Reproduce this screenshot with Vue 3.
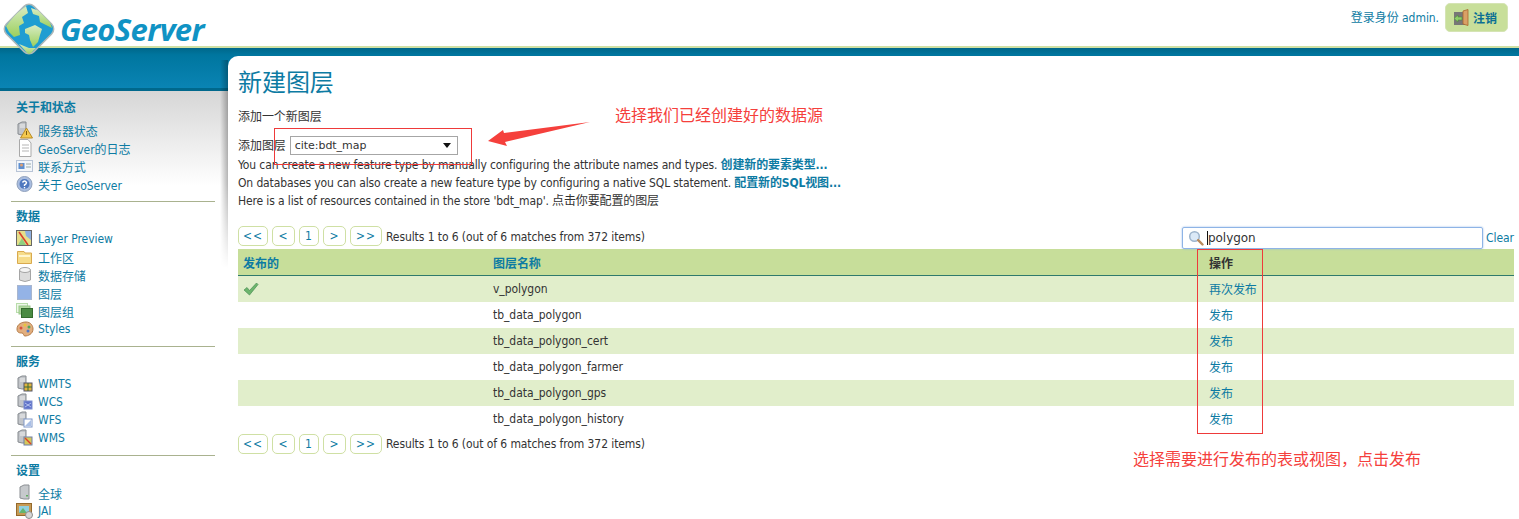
<template>
  <div class="page">
    <header class="header">
      <div class="brand">
        <svg class="logo" width="54" height="54" viewBox="0 0 54 54">
          <defs>
            <clipPath id="gem"><rect x="7.5" y="7.5" width="39" height="39" rx="7" transform="rotate(45 27 27)" /></clipPath>
            <linearGradient id="land" x1="0" y1="0" x2="0" y2="1">
              <stop offset="0" stop-color="#d8ecc4" />
              <stop offset="1" stop-color="#9ccf5c" />
            </linearGradient>
          </defs>
          <rect x="7.5" y="7.5" width="39" height="39" rx="7" transform="rotate(45 27 27)" fill="#1f9dd2" stroke="#aeb8b8" stroke-width="1.5" />
          <g clip-path="url(#gem)" fill="url(#land)">
            <path d="M4 24 L14 12 L24 4 L26 11 L20 15 L22 21 L17 24 L18 33 L12 35 L7 30 Z" />
            <path d="M23 27 L33 23 L40 27 L38 33 L36 40 L31 45 L28 38 L27 33 L23 31 Z" />
            <path d="M29 6 L38 9 L47 18 L50 26 L44 23 L38 20 L37 14 L31 12 Z" />
            <path d="M17 42 L27 46 L34 46 L27 53 Z" />
          </g>
        </svg>
        <span class="wordmark">GeoServer</span>
      </div>
      <div class="login">
        <span>登录身份 admin.</span>
        <a class="logout">
          <svg width="17" height="17" viewBox="0 0 17 17">
            <rect x="1" y="3" width="11" height="13" fill="#777" />
            <path d="M10 2 L15 0.5 V16.5 L10 15 Z" fill="#d9a066" stroke="#a8642c" stroke-width="0.8" />
            <path d="M1 9.5 L5 6 V8 H9 V11 H5 V13 Z" fill="#8fce6a" stroke="#4d8f3a" stroke-width="0.6" />
          </svg>
          注销
        </a>
      </div>
    </header>
    <div class="band"></div>

    <div class="body">
      <aside class="sidebar">
        <section v-for="group in menu" :key="group.title" class="group">
          <h3>{{ group.title }}</h3>
          <ul>
            <li v-for="item in group.items" :key="item.label">
              <svg class="icon" width="18" height="18" viewBox="0 0 18 18" v-html="icons[item.icon]"></svg>
              <span>{{ item.label }}</span>
            </li>
          </ul>
        </section>
      </aside>

      <main class="content">
        <h1>新建图层</h1>
        <p class="intro">添加一个新图层</p>
        <div class="store-row">
          <label>添加图层</label>
          <div class="select">
            <span>cite:bdt_map</span>
            <i class="caret"></i>
          </div>
          <svg class="red-arrow" width="103" height="25" viewBox="0 0 103 25">
            <path d="M0 19 L15 8 L16 11 L102 0 L17 20 L19 24 Z" fill="#f5403c" />
          </svg>
          <span class="note note-top">选择我们已经创建好的数据源</span>
        </div>
        <p class="line">You can create a new feature type by manually configuring the attribute names and types. <b>创建新的要素类型...</b></p>
        <p class="line">On databases you can also create a new feature type by configuring a native SQL statement. <b>配置新的SQL视图...</b></p>
        <p class="line">Here is a list of resources contained in the store 'bdt_map'. 点击你要配置的图层</p>

        <div class="toolbar">
          <div class="pager">
            <button v-for="p in pager" :key="p.text" :class="p.kind">{{ p.text }}</button>
            <span class="count">Results 1 to 6 (out of 6 matches from 372 items)</span>
          </div>
          <div class="search">
            <div class="search-box">
              <svg width="16" height="16" viewBox="0 0 16 16">
                <circle cx="6.5" cy="6.5" r="4.8" fill="#dbe9f7" stroke="#9db4cc" stroke-width="1.5" />
                <path d="M10.2 10.2 L14.5 14.5" stroke="#b98a5a" stroke-width="2.4" stroke-linecap="round" />
              </svg>
              <span class="cursor"></span>
              <span>polygon</span>
            </div>
            <a>Clear</a>
          </div>
        </div>

        <table>
          <thead>
            <tr>
              <th class="col-pub">发布的</th>
              <th class="col-name">图层名称</th>
              <th class="col-act">操作</th>
            </tr>
          </thead>
          <tbody>
            <tr v-for="(row, i) in rows" :key="row.name" :class="{ odd: i % 2 === 0 }">
              <td>
                <svg v-if="row.published" class="check" width="16" height="14" viewBox="0 0 16 14">
                  <path d="M1 8 L4 5.5 L6.5 8.5 L13.5 1 L15 2.5 L6.5 13 Z" fill="#6cb56c" stroke="#4a8f55" stroke-width="0.7" />
                </svg>
              </td>
              <td class="name">{{ row.name }}</td>
              <td class="action"><a>{{ row.published ? '再次发布' : '发布' }}</a></td>
            </tr>
          </tbody>
        </table>

        <div class="pager pager-bottom">
          <button v-for="p in pager" :key="p.text" :class="p.kind">{{ p.text }}</button>
          <span class="count">Results 1 to 6 (out of 6 matches from 372 items)</span>
        </div>

        <div class="mark mark-select"></div>
        <div class="mark mark-actions"></div>
        <span class="note note-bottom">选择需要进行发布的表或视图，点击发布</span>
      </main>
    </div>
  </div>
</template>

<script setup>
const server = '<path d="M2 3 L6 1 H10 V14 H6 L2 13 Z" fill="#c2c5c9" stroke="#858a8f"/><path d="M4 4 H9 M4 6 H9" stroke="#eee"/>'

const icons = {
  status: server + '<path d="M10.5 7 L16.5 17 H4.5 Z" fill="#f4c94e" stroke="#b98a24"/><path d="M10.5 10 V14" stroke="#7a5a10"/>',
  doc: '<path d="M3.5 .5 H12 L15 4 V17.5 H3.5 Z" fill="#fff" stroke="#a9a9a9"/><path d="M6 6 H13 M6 9 H13 M6 12 H13" stroke="#b5b5b5"/>',
  card: '<rect x=".5" y="3.5" width="16" height="11" fill="#f3f6fa" stroke="#b8c4d6"/><rect x="2.5" y="6" width="6" height="6" fill="#5f8fd0"/><circle cx="5.5" cy="8" r="1.5" fill="#e0a070"/><path d="M10 7 H15 M10 10 H15" stroke="#9aa"/>',
  about: '<circle cx="8.5" cy="9" r="7.5" fill="#a9bde0" stroke="#8fa0bb"/><circle cx="8.5" cy="9" r="5" fill="#4f78bf"/><path d="M6.5 7.5 Q8.5 4.5 10.5 7.5 Q10.5 9 8.5 10 V11" fill="none" stroke="#fff" stroke-width="1.4"/><rect x="7.8" y="12" width="1.4" height="1.4" fill="#fff"/>',
  preview: '<rect x=".5" y=".5" width="15" height="15" fill="#e6df8a" stroke="#666"/><path d="M9 1 H15 V10 L10 6 Z" fill="#8fb0e0"/><path d="M2 15 L6 8 L10 15 Z" fill="#8fcf80"/><path d="M3 2 L12 15" stroke="#d9402c" stroke-width="1.6"/>',
  folder: '<path d="M1.5 3.5 H8 L9 5 H15.5 V15.5 H1.5 Z" fill="#f6dc8a" stroke="#d9a94e"/><rect x="3" y="7" width="11" height="2" fill="#fff6cf"/>',
  store: '<path d="M3.5 4 V14 Q9 17 14.5 14 V4 Z" fill="#dcdcdc" stroke="#a5a5a5"/><ellipse cx="9" cy="4" rx="5.5" ry="2.5" fill="#f4f4f4" stroke="#a5a5a5"/>',
  layer: '<rect x="1.5" y="1.5" width="14" height="14" fill="#94b3e6" stroke="#a8b6cf"/>',
  group: '<rect x=".5" y="1.5" width="11" height="9" fill="#eef7e8" stroke="#b8ddaa"/><rect x="3" y="4" width="11" height="8" fill="#b5daa2" stroke="#96c688"/><rect x="5.5" y="6.5" width="11" height="9" fill="#4a8a42" stroke="#356b2e"/>',
  styles: '<path d="M1 9 C1 4 6 2 10 2 C15 2 17 6 17 9 C17 14 12 16 9 16 C7 16 8 13 6 13 C4 13 1 13 1 9 Z" fill="#e2ae7e" stroke="#b57d4a"/><circle cx="5" cy="8" r="1.5" fill="#d9503a"/><circle cx="9" cy="5" r="1.5" fill="#e8c53c"/><circle cx="13" cy="7" r="1.5" fill="#4fa85a"/><circle cx="12" cy="11" r="1.5" fill="#4f78c9"/>',
  wmts: server + '<rect x="8" y="8" width="8" height="8" fill="#e0b43c" stroke="#556"/><path d="M12 8 V16 M8 12 H16" stroke="#3a6a3a"/>',
  wcs: server + '<rect x="8" y="8" width="8" height="8" fill="#5f72c9" stroke="#7f8fd0"/><path d="M9 10 L15 14 M15 10 L9 14" stroke="#b5c2ef"/>',
  wfs: server + '<rect x="8" y="8" width="8" height="8" fill="#fff" stroke="#7e97c9"/><path d="M9 15 L15 9 V15 Z" fill="#a9bfe6"/>',
  wms: server + '<rect x="8" y="8" width="8" height="8" fill="#d6c85a" stroke="#6f7fa8"/><path d="M9 9 L15 15" stroke="#d9402c" stroke-width="1.4"/>',
  global: '<path d="M4 3 L8 1 H13 V15 H8 L4 14 Z" fill="#c6c9cc" stroke="#8b8f93"/><rect x="10" y="11" width="2" height="1.5" fill="#5fae5f"/>',
  jai: '<rect x=".5" y="1.5" width="15" height="12" fill="#c69a55" stroke="#94692c"/><rect x="3" y="4" width="10" height="7" fill="#8fd0e0"/><path d="M3 11 L7 6 L11 11 Z" fill="#63b56f"/><circle cx="13" cy="13" r="3.5" fill="#d5d5d5" stroke="#8d8d8d"/>'
}

const menu = [
  {
    title: '关于和状态',
    items: [
      { label: '服务器状态', icon: 'status' },
      { label: 'GeoServer的日志', icon: 'doc' },
      { label: '联系方式', icon: 'card' },
      { label: '关于 GeoServer', icon: 'about' }
    ]
  },
  {
    title: '数据',
    items: [
      { label: 'Layer Preview', icon: 'preview' },
      { label: '工作区', icon: 'folder' },
      { label: '数据存储', icon: 'store' },
      { label: '图层', icon: 'layer' },
      { label: '图层组', icon: 'group' },
      { label: 'Styles', icon: 'styles' }
    ]
  },
  {
    title: '服务',
    items: [
      { label: 'WMTS', icon: 'wmts' },
      { label: 'WCS', icon: 'wcs' },
      { label: 'WFS', icon: 'wfs' },
      { label: 'WMS', icon: 'wms' }
    ]
  },
  {
    title: '设置',
    items: [
      { label: '全球', icon: 'global' },
      { label: 'JAI', icon: 'jai' }
    ]
  }
]

const pager = [
  { text: '<<', kind: 'first' },
  { text: '<', kind: 'step' },
  { text: '1', kind: 'num' },
  { text: '>', kind: 'step' },
  { text: '>>', kind: 'last' }
]

const rows = [
  { name: 'v_polygon', published: true },
  { name: 'tb_data_polygon', published: false },
  { name: 'tb_data_polygon_cert', published: false },
  { name: 'tb_data_polygon_farmer', published: false },
  { name: 'tb_data_polygon_gps', published: false },
  { name: 'tb_data_polygon_history', published: false }
]
</script>

<style>
html, body {
  margin: 0;
  height: 519px;
  overflow: hidden;
  background: #fff;
}
</style>

<style scoped>
.page {
  width: 1519px;
  height: 519px;
  overflow: hidden;
  font-family: "DejaVu Sans Condensed", "DejaVu Sans", "Noto Sans CJK SC", sans-serif;
  font-size: 12px;
  letter-spacing: -0.05px;
  color: #333;
}

.header {
  height: 46px;
  display: flex;
  justify-content: space-between;
  border-bottom: 2px solid #cfe0a4;
  box-sizing: content-box;
}

.brand {
  display: flex;
  align-items: flex-start;
  position: relative;
  z-index: 2;
}

.logo {
  margin: 2px 0 0 2px;
  flex: none;
}

.wordmark {
  margin: 10px 0 0 4px;
  font-family: "Open Sans", sans-serif;
  font-style: italic;
  font-weight: 700;
  font-size: 31px;
  line-height: 38px;
  letter-spacing: -0.65px;
  color: #1093c4;
}

.login {
  display: flex;
  align-items: flex-start;
  gap: 6px;
  padding: 3px 11px 0 0;
  color: #0d7ba3;
}

.login > span {
  margin-top: 5px;
}

.logout {
  width: 63px;
  height: 29px;
  box-sizing: border-box;
  display: flex;
  align-items: center;
  gap: 3px;
  padding-left: 7px;
  border: 1px solid #d5e4b4;
  border-radius: 5px;
  background: #c8df9a;
  color: #0b6f94;
  font-weight: 700;
  font-size: 12px;
}

.band {
  height: 40px;
  background: linear-gradient(#00678a 0, #00769f 7px, #0a84b4 100%);
  border-bottom: 3px solid #00688c;
  box-sizing: content-box;
}

.body {
  display: flex;
  height: 428px;
  position: relative;
}

.sidebar {
  width: 228px;
  flex: none;
  box-sizing: border-box;
  padding: 10px 13px 0 16px;
  background: linear-gradient(#d6d6d6 0, #fff 95px);
  color: #0d7ba3;
}

.group {
  margin-bottom: 8px;
}

.group + .group {
  border-top: 1px solid #a9b28f;
  margin-left: -5px;
  padding-left: 5px;
  padding-top: 8px;
}

.sidebar h3 {
  margin: 0 0 6px;
  font-size: 12px;
  line-height: 14px;
  font-weight: 700;
  color: #0d7ba3;
}

.sidebar ul {
  margin: 0;
  padding: 0;
  list-style: none;
}

.sidebar li {
  height: 18px;
  display: flex;
  align-items: center;
  gap: 4px;
}

.icon {
  flex: none;
}

.content {
  flex: 1;
  position: relative;
  margin-top: -35px;
  padding: 12px 5px 0 10px;
  background: #fff;
  border-radius: 10px 0 0 0;
}

/* soft shadow on the left edge, it fades out lower down */
.content::before {
  content: "";
  position: absolute;
  left: -8px;
  top: 4px;
  width: 8px;
  height: 208px;
  background: linear-gradient(to right, rgba(0, 0, 0, 0), rgba(0, 0, 0, 0.28));
  -webkit-mask-image: linear-gradient(#000 60%, transparent);
  mask-image: linear-gradient(#000 60%, transparent);
}

h1 {
  margin: 0;
  font-size: 24px;
  line-height: 30px;
  font-weight: 400;
  color: #0d7ba3;
}

.intro {
  margin: 11px 0 0;
  line-height: 16px;
}

.store-row {
  height: 25px;
  margin: 5px 0 1px;
  display: flex;
  align-items: flex-end;
  gap: 4px;
  position: relative;
}

.store-row label {
  line-height: 18px;
}

.select {
  width: 168px;
  height: 19px;
  box-sizing: border-box;
  display: flex;
  align-items: center;
  justify-content: space-between;
  padding: 0 6px 0 4px;
  border: 1px solid #a6a6a6;
  background: #fff;
  font-family: "DejaVu Sans", sans-serif;
  font-size: 11px;
}

.caret {
  width: 0;
  height: 0;
  border-left: 4px solid transparent;
  border-right: 4px solid transparent;
  border-top: 5px solid #111;
}

.red-arrow {
  position: absolute;
  left: 250px;
  top: -8px;
}

.note {
  position: absolute;
  font-size: 16px;
  line-height: 20px;
  letter-spacing: 0;
  color: #f5403c;
  white-space: nowrap;
}

.note-top {
  left: 377px;
  top: -24px;
}

.note-bottom {
  left: 905px;
  top: 394px;
}

.line {
  margin: 0;
  line-height: 18px;
  letter-spacing: -0.13px;
  white-space: nowrap;
}

.line b {
  color: #0d7ba3;
}

.toolbar {
  display: flex;
  justify-content: space-between;
  align-items: center;
  margin-top: 15px;
  height: 24px;
}

.pager {
  display: flex;
  align-items: center;
  gap: 4px;
}

.pager button {
  height: 20px;
  box-sizing: border-box;
  padding: 0;
  border: 1px solid #cfe0a4;
  border-radius: 5px;
  background: #fff;
  color: #0d7ba3;
  font-family: inherit;
  font-size: 12px;
  letter-spacing: 1px;
}

.toolbar .pager button {
  margin-top: -2px;
}

.pager .first {
  width: 30px;
}

.pager .step {
  width: 23px;
}

.pager .num {
  width: 20px;
}

.pager .last {
  width: 32px;
}

.count {
  letter-spacing: -0.09px;
}

.search {
  display: flex;
  align-items: center;
  gap: 3px;
  margin-top: 2px;
  color: #0d7ba3;
}

.search-box {
  width: 301px;
  height: 22px;
  box-sizing: border-box;
  display: flex;
  align-items: center;
  gap: 3px;
  padding-left: 5px;
  border: 1px solid #8eb4e6;
  border-radius: 2px;
  box-shadow: 0 0 2px #8eb4e6;
  font-family: "DejaVu Sans", sans-serif;
  font-size: 12px;
  color: #333;
}

.cursor {
  width: 1px;
  height: 14px;
  background: #111;
  margin-right: -3px;
}

table {
  width: 100%;
  border-collapse: collapse;
  table-layout: fixed;
}

th {
  height: 26px;
  padding: 0 0 0 5px;
  text-align: left;
  background: #c7de9a;
  border-bottom: 1px solid #2f7a6c;
  color: #0d7ba3;
  font-size: 12px;
}

td {
  height: 26px;
  box-sizing: border-box;
  padding: 0 0 0 5px;
}

.col-pub {
  width: 245px;
}

.col-act {
  width: 305px;
  padding-left: 11px;
  color: #333;
}

td.name {
  padding-top: 1px;
}

td.action {
  padding: 0 0 1px 11px;
  color: #0d7ba3;
}

tr.odd td {
  background: #e1eecb;
}

.check {
  display: block;
}

.pager-bottom {
  margin-top: 2px;
}

.mark {
  position: absolute;
  box-sizing: border-box;
  border: 1px solid #ee3a3a;
  pointer-events: none;
}

.mark-select {
  left: 46px;
  top: 72px;
  width: 198px;
  height: 37px;
}

.mark-actions {
  left: 969px;
  top: 193px;
  width: 66px;
  height: 185px;
}
</style>
